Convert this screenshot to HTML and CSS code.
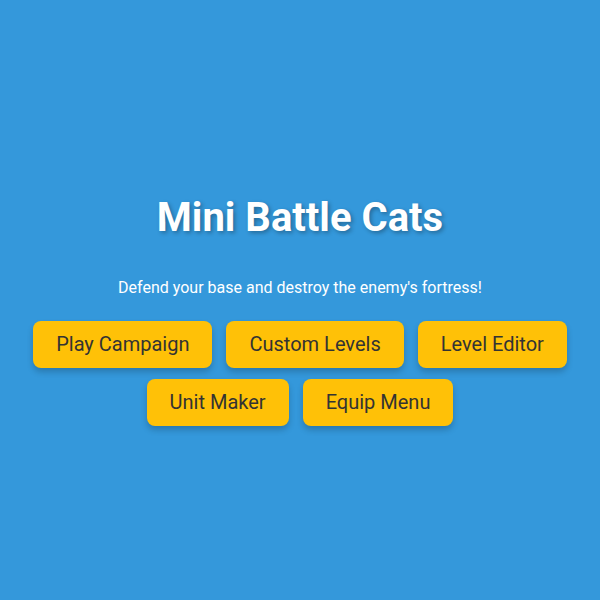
FILE: index.html
```html
<!DOCTYPE html>
<html>
<head>
  <title>Mini Battle Cats</title>
  <link rel="stylesheet" href="styles.css">
</head>
<body>
  <div class="menu">
    <h1>Mini Battle Cats</h1>
    <p class="tagline">Defend your base and destroy the enemy's fortress!</p>
    <div class="buttons">
      <button>Play Campaign</button>
      <button>Custom Levels</button>
      <button>Level Editor</button>
      <button>Unit Maker</button>
      <button>Equip Menu</button>
    </div>
  </div>
</body>
</html>
```

FILE: styles.css
```css
body {
  margin: 0;
  font-family: Roboto, "Liberation Sans", sans-serif;
  background-color: #3498db;
  color: #fff;
}

.menu {
  min-height: 100vh;
  display: flex;
  flex-direction: column;
  align-items: center;
  justify-content: center;
  padding: 20px 20px 0;
  box-sizing: border-box;
}

h1 {
  margin: 0 0 37px;
  font-size: 40px;
  font-weight: 700;
  text-shadow: 2px 2px 4px rgba(0, 0, 0, 0.3);
}

.tagline {
  margin: 0 0 24px;
  font-size: 16px;
}

.buttons {
  display: flex;
  flex-wrap: wrap;
  justify-content: center;
  gap: 11px 14px;
}

button {
  padding: 12px 23px;
  font-family: inherit;
  font-size: 20px;
  line-height: 23px;
  color: #333;
  background-color: #ffc107;
  border: none;
  border-radius: 8px;
  cursor: pointer;
  box-shadow: 0 4px 6px rgba(0, 0, 0, 0.2);
}
```
